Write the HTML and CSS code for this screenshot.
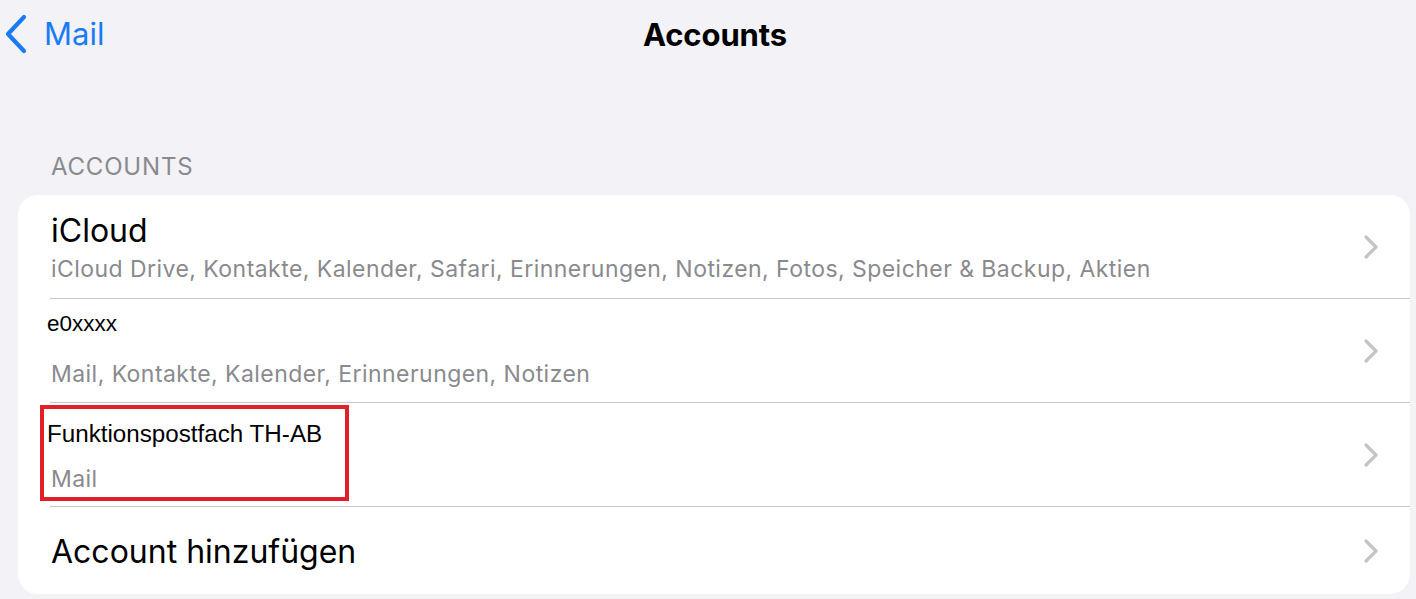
FILE: index.html
```html
<!DOCTYPE html>
<html lang="de">
<head>
<meta charset="utf-8">
<title>Accounts</title>
<link rel="stylesheet" href="styles.css">
</head>
<body>
<div class="page">
  <header class="nav">
    <a class="back">
      <svg class="back-icon" width="24" height="40" viewBox="0 0 24 40"><path d="M20 3 L4 20 L20 37" fill="none" stroke="#1a7cf4" stroke-width="4.2" stroke-linecap="round" stroke-linejoin="round"/></svg>
      <span class="back-label">Mail</span>
    </a>
    <h1 class="nav-title">Accounts</h1>
  </header>

  <div class="section-header">ACCOUNTS</div>

  <div class="card">
    <div class="row row-icloud">
      <div class="row-text">
        <div class="title title-large">iCloud</div>
        <div class="subtitle sub-icloud">iCloud Drive, Kontakte, Kalender, Safari, Erinnerungen, Notizen, Fotos, Speicher &amp; Backup, Aktien</div>
      </div>
      <svg class="chev" width="16" height="24" viewBox="0 0 16 24"><path d="M3 2 L13 12 L3 22" fill="none" stroke="#c4c4c7" stroke-width="3.2" stroke-linecap="round" stroke-linejoin="round"/></svg>
    </div>
    <div class="row row-e0">
      <div class="row-text">
        <div class="title title-plain title-e0">e0xxxx</div>
        <div class="subtitle sub-e0">Mail, Kontakte, Kalender, Erinnerungen, Notizen</div>
      </div>
      <svg class="chev" width="16" height="24" viewBox="0 0 16 24"><path d="M3 2 L13 12 L3 22" fill="none" stroke="#c4c4c7" stroke-width="3.2" stroke-linecap="round" stroke-linejoin="round"/></svg>
    </div>
    <div class="row row-funk">
      <div class="row-text">
        <div class="title title-plain title-funk">Funktionspostfach TH-AB</div>
        <div class="subtitle sub-funk">Mail</div>
      </div>
      <div class="highlight"></div>
      <svg class="chev" width="16" height="24" viewBox="0 0 16 24"><path d="M3 2 L13 12 L3 22" fill="none" stroke="#c4c4c7" stroke-width="3.2" stroke-linecap="round" stroke-linejoin="round"/></svg>
    </div>
    <div class="row row-add">
      <div class="row-text">
        <div class="title title-large">Account hinzufügen</div>
      </div>
      <svg class="chev" width="16" height="24" viewBox="0 0 16 24"><path d="M3 2 L13 12 L3 22" fill="none" stroke="#c4c4c7" stroke-width="3.2" stroke-linecap="round" stroke-linejoin="round"/></svg>
    </div>
  </div>
</div>
</body>
</html>
```

FILE: styles.css
```css
html, body {
  margin: 0;
  padding: 0;
  background: #f2f2f7;
}
body {
  font-family: "Inter", "Liberation Sans", sans-serif;
  color: #000;
  width: 1416px;
  height: 599px;
  overflow: hidden;
}
.page {
  display: flex;
  flex-direction: column;
}
.nav {
  position: relative;
  height: 70px;
  display: flex;
  align-items: flex-start;
  justify-content: center;
}
.back {
  position: absolute;
  left: 4px;
  top: 14px;
  display: flex;
  align-items: center;
  gap: 16px;
  color: #1a7cf4;
}
.back-icon {
  display: block;
}
.back-label {
  font-size: 31px;
  line-height: 40px;
  font-weight: 400;
}
.nav-title {
  margin: 15px 0 0 14px;
  font-size: 31px;
  line-height: 40px;
  font-weight: 700;
  letter-spacing: -0.1px;
}
.section-header {
  margin: 82px 0 0 51px;
  font-size: 24px;
  line-height: 30px;
  color: #8a8a8e;
  letter-spacing: 0.8px;
}
.card {
  margin: 13px 6px 0 18px;
  background: #fff;
  border-radius: 20px;
  height: 399px;
  display: flex;
  flex-direction: column;
}
.row {
  position: relative;
  display: flex;
  align-items: center;
  padding-left: 33px;
  padding-right: 31px;
  height: 104px;
  box-sizing: border-box;
}
.row::after {
  content: "";
  position: absolute;
  left: 32px;
  right: 0;
  bottom: 0;
  height: 1px;
  background: #c8c8cc;
}
.row-add::after {
  display: none;
}
.row-add {
  height: 87px;
}
.row-icloud {
  height: 104px;
}
.row-text {
  flex: 1;
  display: flex;
  flex-direction: column;
  align-self: flex-start;
}
.title-large {
  font-size: 32px;
  line-height: 40px;
}
.title-plain {
  font-family: "Liberation Sans", Arial, sans-serif;
  line-height: 28px;
  margin-left: -4px;
}
.title-e0 {
  font-size: 22.5px;
}
.title-funk {
  font-size: 24.2px;
}
.subtitle {
  font-size: 23px;
  line-height: 30px;
  color: #8a8a8e;
  letter-spacing: 0.45px;
}
.row-icloud .row-text {
  padding-top: 16px;
}
.sub-icloud {
  margin-top: 3px;
}
.row-e0 .row-text {
  padding-top: 11px;
}
.sub-e0 {
  margin-top: 21px;
}
.row-funk .row-text {
  padding-top: 17px;
}
.sub-funk {
  margin-top: 16px;
}
.row-add .row-text {
  padding-top: 25px;
}
.chev {
  display: block;
  flex: none;
}
.highlight {
  position: absolute;
  left: 22px;
  top: 2px;
  width: 309px;
  height: 96px;
  box-sizing: border-box;
  border: 4px solid #e1202a;
}
```
